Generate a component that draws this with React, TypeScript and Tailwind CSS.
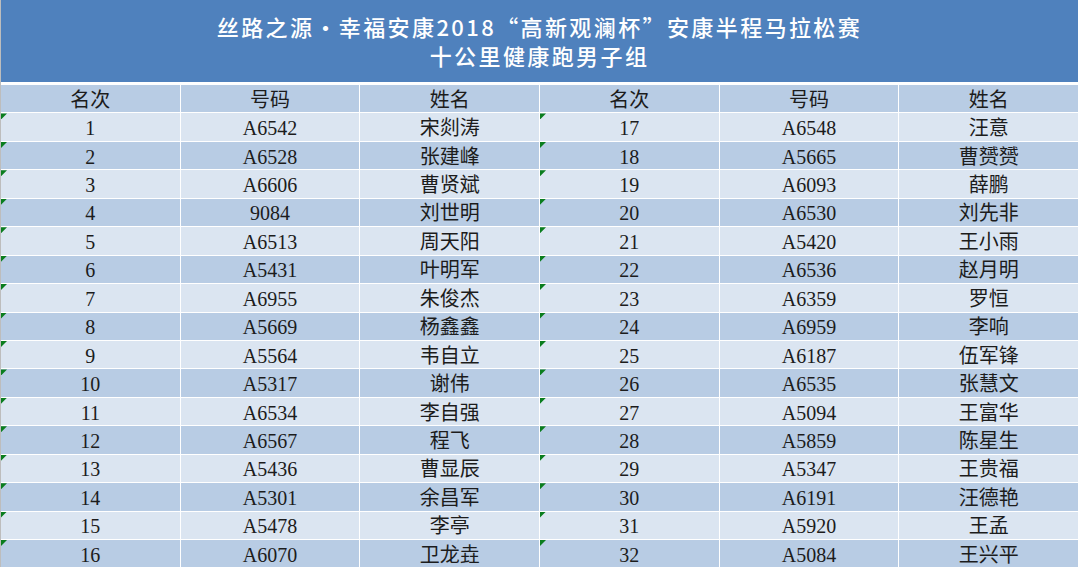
const left: [string, string, string][] = [
  ["1", "A6542", "宋剡涛"],
  ["2", "A6528", "张建峰"],
  ["3", "A6606", "曹贤斌"],
  ["4", "9084", "刘世明"],
  ["5", "A6513", "周天阳"],
  ["6", "A5431", "叶明军"],
  ["7", "A6955", "朱俊杰"],
  ["8", "A5669", "杨鑫鑫"],
  ["9", "A5564", "韦自立"],
  ["10", "A5317", "谢伟"],
  ["11", "A6534", "李自强"],
  ["12", "A6567", "程飞"],
  ["13", "A5436", "曹显辰"],
  ["14", "A5301", "余昌军"],
  ["15", "A5478", "李亭"],
  ["16", "A6070", "卫龙垚"],
];

const right: [string, string, string][] = [
  ["17", "A6548", "汪意"],
  ["18", "A5665", "曹赟赟"],
  ["19", "A6093", "薛鹏"],
  ["20", "A6530", "刘先非"],
  ["21", "A5420", "王小雨"],
  ["22", "A6536", "赵月明"],
  ["23", "A6359", "罗恒"],
  ["24", "A6959", "李响"],
  ["25", "A6187", "伍军锋"],
  ["26", "A6535", "张慧文"],
  ["27", "A5094", "王富华"],
  ["28", "A5859", "陈星生"],
  ["29", "A5347", "王贵福"],
  ["30", "A6191", "汪德艳"],
  ["31", "A5920", "王孟"],
  ["32", "A5084", "王兴平"],
];

const headers = ["名次", "号码", "姓名", "名次", "号码", "姓名"];

function Cell({ text, bg, flag }: { text: string; bg: string; flag?: boolean }) {
  return (
    <div className={`relative flex h-[27.45px] items-center justify-center ${bg}`}>
      {flag && (
        <span className="absolute left-0 top-0 h-[6px] w-[6px] bg-[#0a7d1e] [clip-path:polygon(0_0,100%_0,0_100%)]" />
      )}
      <span className="pt-[2px]">{text}</span>
    </div>
  );
}

export default function App() {
  return (
    <div className="h-[571px] w-[1080px] overflow-hidden bg-white font-['Liberation_Serif','Noto_Sans_CJK_SC',serif] text-[20px] leading-none text-[#1c1c1c]">
      <div className="w-[1078px] border-l border-[#bdbdbd]">
        <div className="flex h-[82px] flex-col items-center justify-center gap-[7px] bg-[#4f81bd] pb-[2px] text-[22px] tracking-[2.4px] text-white">
          <div className="font-['Noto_Sans_CJK_SC',sans-serif] font-medium">
            丝路之源·幸福安康2018“高新观澜杯”安康半程马拉松赛
          </div>
          <div className="font-['Noto_Sans_CJK_SC',sans-serif] font-medium">十公里健康跑男子组</div>
        </div>
        <div className="mt-[3px] grid grid-cols-6 gap-px bg-white">
          {headers.map((h, i) => (
            <Cell key={"h" + i} text={h} bg="bg-[#b8cce4]" />
          ))}
          {left.map((row, r) => {
            const bg = r % 2 === 0 ? "bg-[#dbe5f1]" : "bg-[#b8cce4]";
            const cells = [...row, ...right[r]];
            return cells.map((c, i) => (
              <Cell key={r + "-" + i} text={c} bg={bg} flag={i === 0 || i === 3} />
            ));
          })}
        </div>
      </div>
    </div>
  );
}
